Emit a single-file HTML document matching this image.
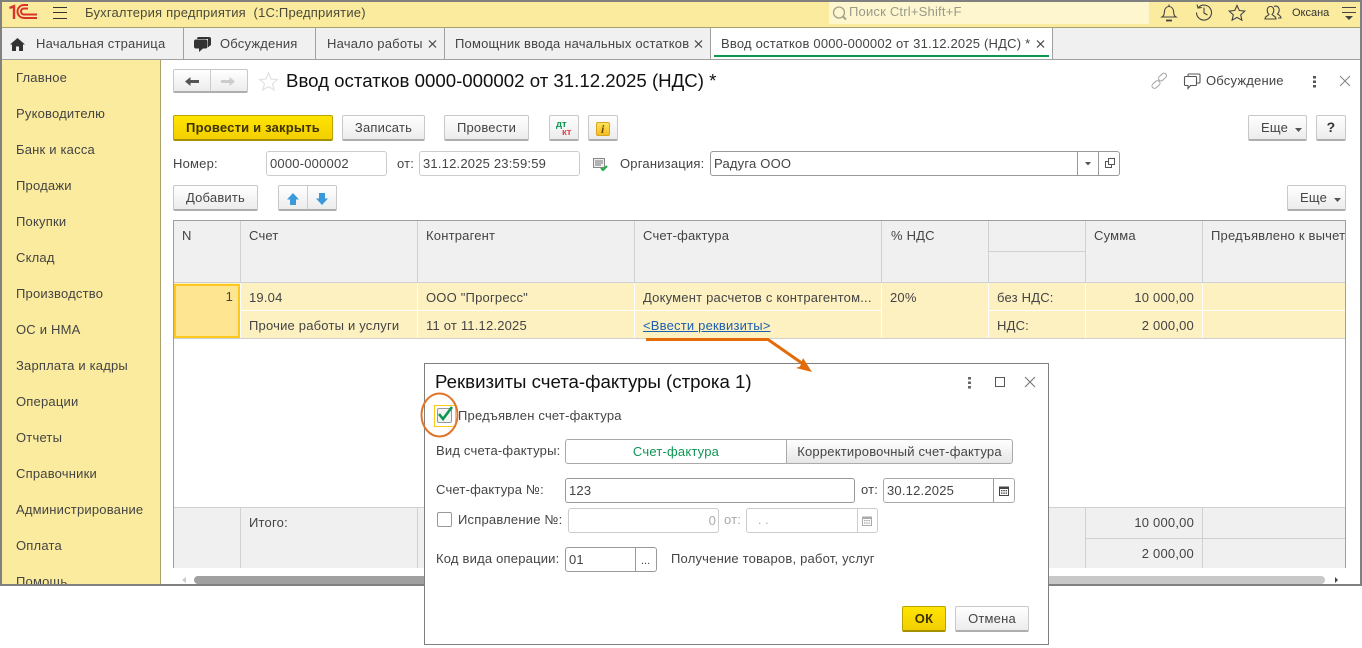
<!DOCTYPE html>
<html><head><meta charset="utf-8"><style>
html,body{margin:0;padding:0;background:#fff}
#p{position:relative;width:1362px;height:648px;overflow:hidden;background:#fff;font:13px "Liberation Sans",sans-serif;color:#444}
.a,.t,.b,.f,.l{position:absolute;box-sizing:border-box}
.t{white-space:nowrap;line-height:16px;height:16px;letter-spacing:.2px}
.r{text-align:right}
.b{background:linear-gradient(#fff,#ececec);border:1px solid #c8c8c8;border-bottom:2px solid #aeaeae;border-radius:2px;text-align:center;line-height:23px;color:#444;letter-spacing:.2px;white-space:nowrap}
.y{background:linear-gradient(#ffe400,#f3cf00);border:1px solid #b9a300;border-bottom:2px solid #a59100;font-weight:bold;color:#3c3300}
.f{background:#fff;border:1px solid #ccc;border-radius:3px;line-height:23px;padding-left:3px;color:#444;letter-spacing:.2px;white-space:nowrap}
.d{border-color:#999}
.l{background:#d0d0d0}
.w{background:#fff}
svg{position:absolute;overflow:visible}
</style></head><body><div id="p">

<div class="a" style="left:0;top:0;width:1362px;height:586px;background:#fff;overflow:hidden">
<!-- top bar -->
<div class="a" style="left:0;top:2px;width:1362px;height:25px;background:#fbeb9e"></div>
<div class="a" style="left:0;top:27px;width:1362px;height:1px;background:#a9a06b"></div>
<svg style="left:0;top:0" width="60" height="28"><g fill="none" stroke="#d8342b"><path d="M9.500 8l4.500-1.800V19" stroke-width="2.400"/><path d="M37 18h-13a6.500 6.500 0 0 1 0-13h4" stroke-width="2"/><path d="M37 14.500H24a3 3 0 0 1 0-6h4" stroke-width="2"/></g></svg>
<div class="a" style="left:53px;top:7px;width:14px;height:1px;background:#333"></div>
<div class="a" style="left:53px;top:12px;width:14px;height:1px;background:#333"></div>
<div class="a" style="left:53px;top:18px;width:14px;height:1px;background:#333"></div>
<div class="t" style="left:85px;top:5px;color:#4a4a3a">Бухгалтерия предприятия&nbsp; (1С:Предприятие)</div>
<div class="a" style="left:829px;top:2px;width:320px;height:22px;background:#fdf6cf"></div>
<svg style="left:832px;top:6px" width="16" height="16"><circle cx="7" cy="6.500" r="5.500" fill="none" stroke="#a5a18a" stroke-width="1.300"/><path d="M11 10.500l3 3" stroke="#a5a18a" stroke-width="2"/></svg>
<div class="t" style="left:849px;top:4px;color:#9a9a8a">Поиск Ctrl+Shift+F</div>
<svg style="left:1160px;top:3px" width="190" height="22" fill="none" stroke="#444" stroke-width="1.100"><path d="M2 14c2.500-1.500 2-3 2.500-6 .5-3 2.500-4.500 4.500-4.500s4 1.500 4.500 4.500c.5 3 0 4.500 2.500 6z"/><path d="M6 17.500h6" stroke-width="1.800"/><path d="M9 1.500v2"/><path d="M38.500 4.500A7.500 7.500 0 1 1 36.500 9.500M37 1.500l1 3.500 3.800-.5M44 4.500v5.500l3.500 2"/><path d="M77 2.500l2.300 5 5.500.6-4.100 3.700 1.200 5.400-4.900-2.800-4.900 2.800 1.200-5.400-4.100-3.700 5.500-.6z"/><path d="M105 16c0-3 3-3 4-4.500-3-3-2-8 1.500-8s4.500 5 1.500 8c1 1.500 4 1.500 4 4.500zM114 3.500c3-1.500 6 1 5 5-.2 1-1 2-1.500 2.500 1 1 3.500 1.500 3.500 4h-3"/></svg>
<div class="t" style="left:1292px;top:5px;font-size:11px;letter-spacing:0;color:#333">Оксана</div>
<div class="a" style="left:1342px;top:7px;width:14px;height:1px;background:#444"></div>
<div class="a" style="left:1342px;top:12px;width:14px;height:1px;background:#444"></div>
<svg style="left:1345px;top:16px" width="8" height="5"><path d="M0 0h8l-4 4z" fill="#444"/></svg>

<!-- tabs -->
<div class="a" style="left:0;top:28px;width:1362px;height:31px;background:#f0f0f0"></div>
<div class="a" style="left:0;top:59px;width:1362px;height:1px;background:#a0a0a0"></div>
<div class="a w" style="left:711px;top:28px;width:341px;height:31px"></div>
<div class="a" style="left:183px;top:28px;width:1px;height:31px;background:#a0a0a0"></div>
<div class="a" style="left:315px;top:28px;width:1px;height:31px;background:#a0a0a0"></div>
<div class="a" style="left:444px;top:28px;width:1px;height:31px;background:#a0a0a0"></div>
<div class="a" style="left:710px;top:28px;width:1px;height:31px;background:#a0a0a0"></div>
<div class="a" style="left:1052px;top:28px;width:1px;height:31px;background:#a0a0a0"></div>
<div class="a" style="left:714px;top:55px;width:335px;height:2px;background:#0d9652"></div>
<svg style="left:10px;top:38px" width="15" height="13"><path d="M7.500 0L15 6.500h-2V13H9V8.500H6V13H2V6.500H0z" fill="#333"/></svg>
<svg style="left:194px;top:36px" width="17" height="17"><path d="M4 1h11a2 2 0 0 1 2 2v5a2 2 0 0 1-2 2v1h-1V3H3a2 2 0 0 1 1-2z" fill="#333"/><path d="M2 3.500h9.500a2 2 0 0 1 2 2v5a2 2 0 0 1-2 2H9L5 16v-3.500H2a2 2 0 0 1-2-2v-5a2 2 0 0 1 2-2z" fill="#333"/></svg>
<div class="t" style="left:36px;top:36px">Начальная страница</div>
<div class="t" style="left:220px;top:36px">Обсуждения</div>
<div class="t" style="left:327px;top:36px">Начало работы</div>
<div class="t" style="left:455px;top:36px">Помощник ввода начальных остатков</div>
<div class="t" style="left:721px;top:36px">Ввод остатков 0000-000002 от 31.12.2025 (НДС) *</div>
<svg style="left:429px;top:40px" width="620" height="9" stroke="#444" stroke-width="1.200"><path d="M0 .5l7 7M7 .5l-7 7"/><path d="M266 .5l7 7M273 .5l-7 7"/><path d="M608 .5l7 7M615 .5l-7 7"/></svg>

<!-- sidebar -->
<div class="a" style="left:2px;top:60px;width:158px;height:526px;background:#fbeb9e"></div>
<div class="a" style="left:160px;top:60px;width:1px;height:526px;background:#a9a06b"></div>
<div class="t" style="left:16px;top:70px">Главное</div>
<div class="t" style="left:16px;top:106px">Руководителю</div>
<div class="t" style="left:16px;top:142px">Банк и касса</div>
<div class="t" style="left:16px;top:178px">Продажи</div>
<div class="t" style="left:16px;top:214px">Покупки</div>
<div class="t" style="left:16px;top:250px">Склад</div>
<div class="t" style="left:16px;top:286px">Производство</div>
<div class="t" style="left:16px;top:322px">ОС и НМА</div>
<div class="t" style="left:16px;top:358px">Зарплата и кадры</div>
<div class="t" style="left:16px;top:394px">Операции</div>
<div class="t" style="left:16px;top:430px">Отчеты</div>
<div class="t" style="left:16px;top:466px">Справочники</div>
<div class="t" style="left:16px;top:502px">Администрирование</div>
<div class="t" style="left:16px;top:538px">Оплата</div>
<div class="t" style="left:16px;top:574px">Помощь</div>

<!-- form header -->
<div class="b" style="left:173px;top:69px;width:75px;height:24px"></div>
<div class="a" style="left:210px;top:70px;width:1px;height:21px;background:#ccc"></div>
<svg style="left:185px;top:77px" width="60" height="10"><path d="M0 4.500L5.500 0v3h8.500v3H5.500v3z" fill="#555"/><path d="M50 4.500L44.500 0v3H36v3h8.500v3z" fill="#ccc"/></svg>
<svg style="left:259px;top:72px" width="19" height="19"><path d="M9.500 1l2.500 6 6.500.5-5 4.200 1.600 6.300-5.600-3.400-5.600 3.400 1.600-6.300-5-4.200 6.500-.5z" fill="#fff" stroke="#e2e2e2" stroke-width="1.200"/></svg>
<div class="t" style="left:286px;top:70px;height:22px;line-height:22px;font-size:18.67px;color:#111;letter-spacing:0">Ввод остатков 0000-000002 от 31.12.2025 (НДС) *</div>
<svg style="left:1150px;top:73px" width="200" height="16" fill="none" stroke="#aaa" stroke-width="1.100"><rect x="8" y="1.500" width="9" height="5" rx="2.500" transform="rotate(-42 12.500 4)"/><rect x="1.500" y="9" width="9" height="5" rx="2.500" transform="rotate(-42 6 11.500)"/><path stroke="#555" d="M35.500 3.500h10a1 1 0 0 1 1 1v7a1 1 0 0 1-1 1h-5l-2.500 3v-3h-2.500a1 1 0 0 1-1-1v-7a1 1 0 0 1 1-1zM38 3.500V2a1 1 0 0 1 1-1h10a1 1 0 0 1 1 1v7a1 1 0 0 1-1 1h-2.500"/><path stroke="#888" d="M190 3l10 10M200 3l-10 10"/></svg>
<div class="t" style="left:1206px;top:73px">Обсуждение</div>
<svg style="left:1313px;top:76px" width="4" height="12"><g fill="#555"><rect x="0" y="0" width="3" height="2.500"/><rect x="0" y="4.500" width="3" height="2.500"/><rect x="0" y="9" width="3" height="2.500"/></g></svg>

<!-- toolbar -->
<div class="b y" style="left:173px;top:115px;width:160px;height:26px">Провести и закрыть</div>
<div class="b" style="left:342px;top:115px;width:83px;height:26px">Записать</div>
<div class="b" style="left:444px;top:115px;width:85px;height:26px">Провести</div>
<div class="b" style="left:549px;top:115px;width:30px;height:26px"></div>
<div class="t" style="left:556px;top:120px;font-size:9.500px;font-weight:bold;color:#0d9652;letter-spacing:0;height:10px;line-height:10px">дт</div>
<div class="t" style="left:562px;top:128px;font-size:9.500px;font-weight:bold;color:#e0444a;letter-spacing:0;height:10px;line-height:10px">кт</div>
<div class="b" style="left:588px;top:115px;width:30px;height:26px"></div>
<div class="a" style="left:596px;top:122px;width:14px;height:14px;background:linear-gradient(#ffe45c,#f5bb20);border:1px solid #d8a520;border-radius:2px"></div>
<div class="t" style="left:601px;top:121px;font:italic bold 12px 'Liberation Serif',serif;line-height:16px;color:#6a4a00;letter-spacing:0">i</div>
<div class="b" style="left:1248px;top:115px;width:59px;height:26px;text-align:left;padding-left:12px">Еще</div>
<svg style="left:1295px;top:128px" width="7" height="4"><path d="M0 0h7L3.500 4z" fill="#555"/></svg>
<div class="b" style="left:1316px;top:115px;width:30px;height:26px;font-weight:bold;font-size:14px;color:#333">?</div>

<!-- header fields -->
<div class="t" style="left:173px;top:156px">Номер:</div>
<div class="f" style="left:266px;top:151px;width:121px;height:25px">0000-000002</div>
<div class="t" style="left:397px;top:156px">от:</div>
<div class="f" style="left:419px;top:151px;width:161px;height:25px">31.12.2025 23:59:59</div>
<svg style="left:593px;top:158px" width="16" height="13"><rect x=".5" y=".5" width="11" height="9" fill="#eee" stroke="#888"/><path d="M2 3h8M2 5h8M2 7h6" stroke="#777"/><path d="M8 10l2 2 4-4" fill="none" stroke="#1da84a" stroke-width="2"/></svg>
<div class="t" style="left:620px;top:156px">Организация:</div>
<div class="f d" style="left:710px;top:151px;width:410px;height:25px">Радуга ООО</div>
<div class="a" style="left:1077px;top:152px;width:1px;height:23px;background:#999"></div>
<div class="a" style="left:1098px;top:152px;width:1px;height:23px;background:#999"></div>
<svg style="left:1085px;top:162px" width="6" height="4"><path d="M0 0h6L3 3.500z" fill="#555"/></svg>
<svg style="left:1105px;top:158px" width="10" height="11" fill="none" stroke="#555"><rect x="3.500" y=".5" width="6" height="6"/><path d="M3 3.500H.5v6h6V7"/></svg>

<div class="b" style="left:173px;top:185px;width:85px;height:26px">Добавить</div>
<div class="b" style="left:278px;top:185px;width:59px;height:26px"></div>
<div class="a" style="left:307px;top:186px;width:1px;height:23px;background:#ccc"></div>
<svg style="left:287px;top:193px" width="44" height="13"><path d="M6 0l6 6.500H9V12H3V6.500H0z" fill="#3a9ad9"/><path d="M35 12l6-6.500h-3V0h-6v5.500h-3z" fill="#3a9ad9"/></svg>
<div class="b" style="left:1287px;top:185px;width:59px;height:26px;text-align:left;padding-left:12px">Еще</div>
<svg style="left:1334px;top:198px" width="7" height="4"><path d="M0 0h7L3.500 4z" fill="#555"/></svg>

<!-- table -->
<div class="a" style="left:173px;top:220px;width:1173px;height:1px;background:#a0a0a0"></div>
<div class="a" style="left:173px;top:220px;width:1px;height:349px;background:#a0a0a0"></div>
<div class="a" style="left:1345px;top:220px;width:1px;height:349px;background:#a0a0a0"></div>
<div class="a" style="left:174px;top:221px;width:1171px;height:61px;background:#f0f0f0"></div>
<div class="l" style="left:240px;top:221px;width:1px;height:61px"></div>
<div class="l" style="left:417px;top:221px;width:1px;height:61px"></div>
<div class="l" style="left:634px;top:221px;width:1px;height:61px"></div>
<div class="l" style="left:881px;top:221px;width:1px;height:61px"></div>
<div class="l" style="left:988px;top:221px;width:1px;height:61px"></div>
<div class="l" style="left:1085px;top:221px;width:1px;height:61px"></div>
<div class="l" style="left:1202px;top:221px;width:1px;height:61px"></div>
<div class="l" style="left:989px;top:251px;width:96px;height:1px"></div>
<div class="l" style="left:174px;top:282px;width:1171px;height:1px"></div>
<div class="t" style="left:182px;top:228px">N</div>
<div class="t" style="left:249px;top:228px">Счет</div>
<div class="t" style="left:426px;top:228px">Контрагент</div>
<div class="t" style="left:643px;top:228px">Счет-фактура</div>
<div class="t" style="left:891px;top:228px">% НДС</div>
<div class="t" style="left:1094px;top:228px">Сумма</div>
<div class="a" style="left:1203px;top:228px;width:142px;height:16px;overflow:hidden"><div class="t" style="left:8px;top:0">Предъявлено к вычету</div></div>

<div class="a" style="left:174px;top:283px;width:1171px;height:55px;background:#fdf1c2"></div>
<div class="a w" style="left:240px;top:283px;width:1px;height:55px"></div>
<div class="a w" style="left:417px;top:283px;width:1px;height:55px"></div>
<div class="a w" style="left:634px;top:283px;width:1px;height:55px"></div>
<div class="a w" style="left:881px;top:283px;width:1px;height:55px"></div>
<div class="a w" style="left:988px;top:283px;width:1px;height:55px"></div>
<div class="a w" style="left:1085px;top:283px;width:1px;height:55px"></div>
<div class="a w" style="left:1202px;top:283px;width:1px;height:55px"></div>
<div class="a w" style="left:241px;top:310px;width:640px;height:1px"></div>
<div class="a w" style="left:989px;top:310px;width:356px;height:1px"></div>
<div class="l" style="left:174px;top:338px;width:1171px;height:1px"></div>
<div class="a" style="left:174px;top:284px;width:66px;height:54px;background:#fde592;border:2px solid #fcc81e"></div>
<div class="t r" style="left:180px;top:289px;width:53px">1</div>
<div class="t" style="left:249px;top:290px">19.04</div>
<div class="t" style="left:249px;top:318px">Прочие работы и услуги</div>
<div class="t" style="left:426px;top:290px">ООО "Прогресс"</div>
<div class="t" style="left:426px;top:318px">11 от 11.12.2025</div>
<div class="t" style="left:643px;top:290px">Документ расчетов с контрагентом...</div>
<div class="t" style="left:643px;top:318px;color:#1c5fb0;text-decoration:underline">&lt;Ввести реквизиты&gt;</div>
<div class="t" style="left:890px;top:290px">20%</div>
<div class="t" style="left:997px;top:290px">без НДС:</div>
<div class="t" style="left:997px;top:318px">НДС:</div>
<div class="t r" style="left:1090px;top:290px;width:104px">10 000,00</div>
<div class="t r" style="left:1090px;top:318px;width:104px">2 000,00</div>

<!-- footer -->
<div class="a" style="left:174px;top:508px;width:1171px;height:60px;background:#f0f0f0"></div>
<div class="l" style="left:174px;top:507px;width:1171px;height:1px"></div>
<div class="l" style="left:240px;top:508px;width:1px;height:60px"></div>
<div class="l" style="left:417px;top:508px;width:1px;height:60px"></div>
<div class="l" style="left:1085px;top:508px;width:1px;height:60px"></div>
<div class="l" style="left:1202px;top:508px;width:1px;height:60px"></div>
<div class="l" style="left:1086px;top:538px;width:259px;height:1px"></div>
<div class="t" style="left:249px;top:515px">Итого:</div>
<div class="t r" style="left:1090px;top:515px;width:104px">10 000,00</div>
<div class="t r" style="left:1090px;top:546px;width:104px">2 000,00</div>
<div class="a w" style="left:173px;top:568px;width:1173px;height:2px"></div>

<!-- scrollbar -->
<div class="a" style="left:194px;top:576px;width:240px;height:8px;background:#a0a0a0;border-radius:4px 0 0 4px"></div>
<div class="a" style="left:1040px;top:576px;width:285px;height:8px;background:#c8c8c8;border-radius:0 4px 4px 0"></div>
<svg style="left:182px;top:577px" width="1156" height="6"><path d="M4 0v6L0 3z" fill="#ccc"/><path d="M1153 0v6l3-3z" fill="#444"/></svg>

<!-- window borders -->
<div class="a" style="left:0;top:0;width:1362px;height:2px;background:#808080"></div>
<div class="a" style="left:0;top:0;width:2px;height:586px;background:#808080"></div>
<div class="a" style="left:1360px;top:0;width:2px;height:586px;background:#808080"></div>
<div class="a" style="left:0;top:584px;width:1362px;height:2px;background:#808080"></div>
</div>

<!-- dialog -->
<div class="a w" style="left:424px;top:363px;width:625px;height:282px;border:1px solid #7f7f7f"></div>
<div class="t" style="left:435px;top:371px;height:22px;line-height:22px;font-size:18.67px;color:#111;letter-spacing:0">Реквизиты счета-фактуры (строка 1)</div>
<svg style="left:968px;top:377px" width="4" height="12"><g fill="#666"><rect width="3" height="2.500"/><rect y="4.500" width="3" height="2.500"/><rect y="9" width="3" height="2.500"/></g></svg>
<svg style="left:995px;top:377px" width="45" height="12" fill="none"><rect x=".5" y=".5" width="9" height="9" stroke="#555"/><path d="M30 0l10 10M40 0L30 10" stroke="#777" stroke-width="1.100"/></svg>

<div class="a" style="left:434px;top:405px;width:22px;height:22px;border:1px solid #fcc81e"></div>
<div class="a" style="left:437px;top:408px;width:15px;height:15px;border:1px solid #999;border-radius:2px;background:#f3f3f3"></div>
<svg style="left:437px;top:405px" width="18" height="17"><path d="M2 9l4 5L15 2" fill="none" stroke="#0d9652" stroke-width="2.600"/></svg>
<div class="t" style="left:458px;top:408px">Предъявлен счет-фактура</div>
<svg style="left:420px;top:392px" width="40" height="48"><ellipse cx="19.500" cy="23" rx="18" ry="21.500" fill="none" stroke="#e0752a" stroke-width="2"/></svg>

<div class="t" style="left:436px;top:443px">Вид счета-фактуры:</div>
<div class="a w" style="left:565px;top:439px;width:222px;height:25px;border:1px solid #aaa;border-radius:3px 0 0 3px;text-align:center;line-height:23px;color:#0d9652;letter-spacing:.2px">Счет-фактура</div>
<div class="a" style="left:786px;top:439px;width:227px;height:25px;border:1px solid #aaa;border-radius:0 3px 3px 0;background:linear-gradient(#fff,#e6e6e6);text-align:center;line-height:23px;color:#444;letter-spacing:.2px;white-space:nowrap">Корректировочный счет-фактура</div>

<div class="t" style="left:436px;top:482px">Счет-фактура №:</div>
<div class="f d" style="left:565px;top:478px;width:290px;height:25px">123</div>
<div class="t" style="left:861px;top:482px">от:</div>
<div class="f d" style="left:883px;top:478px;width:132px;height:25px;border-color:#aaa">30.12.2025</div>
<div class="a" style="left:993px;top:479px;width:1px;height:23px;background:#999"></div>
<svg style="left:999px;top:485px" width="10" height="11"><path d="M0 1.500h10V11H0z" fill="#444"/><path d="M1 4h8v6H1z" fill="#fff"/><path d="M2 5h1.500v1.300H2zM4.300 5h1.500v1.300H4.300zM6.600 5H8v1.300H6.600zM2 7.500h1.500v1.300H2zM4.300 7.500h1.500v1.300H4.300zM6.600 7.500H8v1.300H6.600z" fill="#444"/></svg>

<div class="a" style="left:437px;top:512px;width:15px;height:15px;border:1px solid #999;border-radius:2px;background:#fff"></div>
<div class="t" style="left:458px;top:512px">Исправление №:</div>
<div class="f" style="left:568px;top:508px;width:151px;height:25px;color:#aaa;text-align:right;padding-right:2px">0</div>
<div class="t" style="left:724px;top:512px;color:#aaa">от:</div>
<div class="f" style="left:746px;top:508px;width:132px;height:25px;color:#aaa;padding-left:11px;font-size:12px">. .</div>
<div class="a" style="left:857px;top:509px;width:1px;height:23px;background:#ccc"></div>
<svg style="left:862px;top:515px" width="10" height="11"><path d="M0 1.500h10V11H0z" fill="#aaa"/><path d="M1 4h8v6H1z" fill="#fff"/><path d="M2 5h1.500v1.300H2zM4.300 5h1.500v1.300H4.300zM6.600 5H8v1.300H6.600zM2 7.500h1.500v1.300H2zM4.300 7.500h1.500v1.300H4.300zM6.600 7.500H8v1.300H6.600z" fill="#aaa"/></svg>

<div class="t" style="left:436px;top:551px">Код вида операции:</div>
<div class="f d" style="left:565px;top:547px;width:92px;height:25px">01</div>
<div class="a" style="left:635px;top:548px;width:1px;height:23px;background:#999"></div>
<div class="t" style="left:641px;top:553px;font-size:11px;letter-spacing:0">...</div>
<div class="t" style="left:671px;top:551px">Получение товаров, работ, услуг</div>

<div class="b y" style="left:902px;top:606px;width:44px;height:26px">ОК</div>
<div class="b" style="left:955px;top:606px;width:74px;height:26px">Отмена</div>

<!-- arrow -->
<svg style="left:0;top:0" width="1362" height="648"><path d="M646 339.500H768L806 366" fill="none" stroke="#e36c0a" stroke-width="3"/><path d="M812 372l-16-4 4-1.500 3-8.500z" fill="#e36c0a"/></svg>

</div></body></html>
